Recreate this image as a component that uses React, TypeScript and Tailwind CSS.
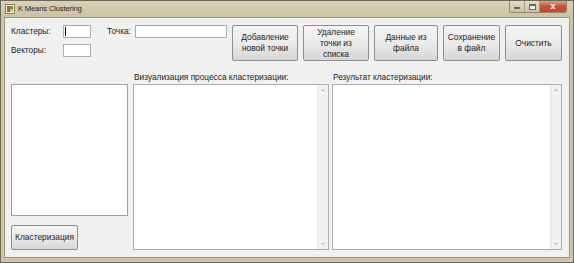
import React from 'react'

const font = { fontFamily: '"Liberation Sans", Arial, sans-serif' }

function TextBox({ className = '', caret = false }: { className?: string; caret?: boolean }) {
  return (
    <div className={`h-[13px] bg-white border border-[#abadb3] border-t-[#a5acb5] flex items-center ${className}`}>
      {caret ? <span className="ml-[1px] block w-px h-[9px] bg-black" /> : null}
    </div>
  )
}

function Btn({ children, className = '' }: { children: React.ReactNode; className?: string }) {
  return (
    <div
      className={`flex items-center justify-center text-center leading-[11px] text-[8.4px] text-[#1e1e1e] rounded-[2px] border border-[#8e8f8f] bg-gradient-to-b from-[#f4f4f4] via-[#ebebeb] to-[#d6d6d6] ${className}`}
    >
      {children}
    </div>
  )
}

function ScrollArea({ className = '' }: { className?: string }) {
  return (
    <div className={`bg-white border border-[#abadb3] flex justify-end ${className}`}>
      <div className="w-[11px] bg-[#f0f0f0] border-l border-[#e6e6e6] flex flex-col items-center justify-between py-[4px]">
        <span className="block w-0 h-0 border-x-[2px] border-x-transparent border-b-[2px] border-b-[#b9b9b9]" />
        <span className="block w-0 h-0 border-x-[2px] border-x-transparent border-t-[2px] border-t-[#b9b9b9]" />
      </div>
    </div>
  )
}

export default function App() {
  return (
    <div style={font} className="w-[574px] h-[263px] bg-[#cdc6a9] border border-[#6f6a58] flex flex-col text-black overflow-hidden">
      {/* title bar */}
      <div className="h-[16px] flex items-start bg-gradient-to-b from-[#d9d2b9] to-[#cac2a3]">
        <div className="flex items-center h-[15px] pl-[4px] gap-[3px]">
          <svg width="10" height="10" viewBox="0 0 10 10">
            <rect x="0.5" y="0.5" width="9" height="9" fill="#f6f1d8" stroke="#8f7d52" />
            <rect x="2" y="2" width="3" height="3" fill="#e04a2f" />
            <rect x="5" y="2" width="3" height="3" fill="#4aa14a" />
            <rect x="2" y="5" width="3" height="3" fill="#3a72c8" />
            <rect x="5" y="5" width="3" height="3" fill="#f0c030" />
          </svg>
          <span className="text-[7.6px] tracking-[-0.15px] text-[#1f1f1f] leading-none">K Means Clustering</span>
        </div>
        <div className="ml-auto mr-[6px] flex h-[12px] rounded-b-[3px] border border-t-0 border-[#8d8872] overflow-hidden">
          <div className="w-[15px] bg-gradient-to-b from-[#e1dcc8] to-[#c9c2a6] border-r border-[#a29d86] flex items-end justify-center pb-[3px]">
            <span className="block w-[6px] h-[2px] bg-[#f2f2f2] border border-[#6d6a5a]" />
          </div>
          <div className="w-[15px] bg-gradient-to-b from-[#e1dcc8] to-[#c9c2a6] border-r border-[#a29d86] flex items-center justify-center">
            <span className="block w-[7px] h-[6px] border border-[#6d6a5a] border-t-2 bg-[#eeeeee]" />
          </div>
          <div className="w-[26px] bg-gradient-to-b from-[#e39a87] via-[#c9503b] to-[#c8442c] flex items-center justify-center text-white text-[9px] font-bold leading-none">
            x
          </div>
        </div>
      </div>

      {/* client area */}
      <div className="flex-1 mx-[3px] mb-[4px] bg-[#f0f0f0] border border-[#9d9783] flex flex-col pl-[6px] pt-[7px] text-[8.3px] text-[#1e1e1e]">
        <div className="flex items-start h-[36px]">
          <div className="grid grid-cols-[52px_28px] gap-y-[6px] items-center">
            <span className="leading-[13px]">Кластеры:</span>
            <TextBox className="w-[28px]" caret />
            <span className="leading-[13px]">Векторы:</span>
            <TextBox className="w-[28px]" />
          </div>
          <span className="ml-[16px] w-[26px] leading-[13px]">Точка:</span>
          <TextBox className="ml-[2px] w-[92px]" />
          <div className="ml-[5px] flex gap-[5px]">
            <Btn className="w-[66px] h-[36px]">Добавление<br />новой точки</Btn>
            <Btn className="w-[66px] h-[36px]">Удаление<br />точки из<br />списка</Btn>
            <Btn className="w-[64px] h-[36px]">Данные из<br />файла</Btn>
            <Btn className="w-[57px] h-[36px]">Сохранение<br />в файл</Btn>
            <Btn className="w-[57px] h-[36px]">Очистить</Btn>
          </div>
        </div>

        <div className="flex mt-[10px]">
          <div className="flex flex-col w-[117px]">
            <div className="mt-[13px] h-[132px] bg-white border border-[#a0a0a0]" />
            <Btn className="mt-[9px] w-[67px] h-[25px]">Кластеризация</Btn>
          </div>
          <div className="ml-[5px] flex flex-col w-[196px]">
            <span className="leading-[13px] pl-[1px]">Визуализация процесса кластеризации:</span>
            <ScrollArea className="h-[166px]" />
          </div>
          <div className="ml-[3px] flex flex-col w-[230px]">
            <span className="leading-[13px] pl-[1px]">Результат кластеризации:</span>
            <ScrollArea className="h-[166px]" />
          </div>
        </div>
      </div>
    </div>
  )
}
